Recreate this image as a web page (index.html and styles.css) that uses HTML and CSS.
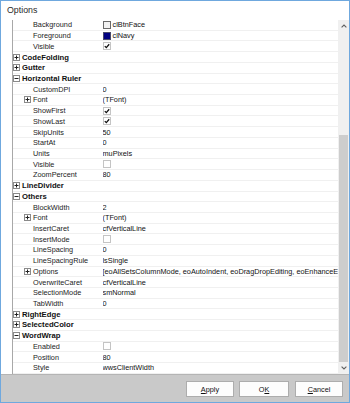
FILE: index.html
```html
<!DOCTYPE html>
<html>
<head>
<meta charset="utf-8">
<title>Options</title>
<link rel="stylesheet" href="styles.css">
</head>
<body>
<div class="window">
  <div class="titlebar">Options</div>
  <div class="grid-area">
    <div class="grid">
      <div class="rows">
        <div class="row l1"><div class="name">Background</div><div class="value"><svg class="sw" width="8" height="8" viewBox="0 0 8 8"><rect x="0.5" y="0.5" width="7" height="7" fill="#f2f2f2" stroke="#6a6a6a"/></svg><span>clBtnFace</span></div></div>
        <div class="row l1"><div class="name">Foreground</div><div class="value"><svg class="sw" width="8" height="8" viewBox="0 0 8 8"><rect x="0.5" y="0.5" width="7" height="7" fill="#000080" stroke="#4a4a6a"/></svg><span>clNavy</span></div></div>
        <div class="row l1"><div class="name">Visible</div><div class="value"><svg class="cb" width="8" height="8" viewBox="0 0 8 8"><rect x="0.5" y="0.5" width="7" height="7" fill="#fff" stroke="#c4c4c4"/><path d="M1.8 4.1L3.3 5.6L6.2 2.3" fill="none" stroke="#111" stroke-width="1.3"/></svg></div></div>
        <div class="row cat"><div class="name"><svg class="ex" width="7" height="7" viewBox="0 0 7 7"><rect x="0.5" y="0.5" width="6" height="6" fill="#fff" stroke="#8a8a8a"/><path d="M1.5 3.5h4M3.5 1.5v4" stroke="#222"/></svg><b>CodeFolding</b></div><div class="value"></div></div>
        <div class="row cat"><div class="name"><svg class="ex" width="7" height="7" viewBox="0 0 7 7"><rect x="0.5" y="0.5" width="6" height="6" fill="#fff" stroke="#8a8a8a"/><path d="M1.5 3.5h4M3.5 1.5v4" stroke="#222"/></svg><b>Gutter</b></div><div class="value"></div></div>
        <div class="row cat"><div class="name"><svg class="ex" width="7" height="7" viewBox="0 0 7 7"><rect x="0.5" y="0.5" width="6" height="6" fill="#fff" stroke="#8a8a8a"/><path d="M1.5 3.5h4" stroke="#222"/></svg><b>Horizontal Ruler</b></div><div class="value"></div></div>
        <div class="row l1"><div class="name">CustomDPI</div><div class="value">0</div></div>
        <div class="row l1x"><div class="name"><svg class="ex" width="7" height="7" viewBox="0 0 7 7"><rect x="0.5" y="0.5" width="6" height="6" fill="#fff" stroke="#8a8a8a"/><path d="M1.5 3.5h4M3.5 1.5v4" stroke="#222"/></svg><span>Font</span></div><div class="value">(TFont)</div></div>
        <div class="row l1"><div class="name">ShowFirst</div><div class="value"><svg class="cb" width="8" height="8" viewBox="0 0 8 8"><rect x="0.5" y="0.5" width="7" height="7" fill="#fff" stroke="#c4c4c4"/><path d="M1.8 4.1L3.3 5.6L6.2 2.3" fill="none" stroke="#111" stroke-width="1.3"/></svg></div></div>
        <div class="row l1"><div class="name">ShowLast</div><div class="value"><svg class="cb" width="8" height="8" viewBox="0 0 8 8"><rect x="0.5" y="0.5" width="7" height="7" fill="#fff" stroke="#c4c4c4"/><path d="M1.8 4.1L3.3 5.6L6.2 2.3" fill="none" stroke="#111" stroke-width="1.3"/></svg></div></div>
        <div class="row l1"><div class="name">SkipUnits</div><div class="value">50</div></div>
        <div class="row l1"><div class="name">StartAt</div><div class="value">0</div></div>
        <div class="row l1"><div class="name">Units</div><div class="value">muPixels</div></div>
        <div class="row l1"><div class="name">Visible</div><div class="value"><svg class="cb" width="8" height="8" viewBox="0 0 8 8"><rect x="0.5" y="0.5" width="7" height="7" fill="#fff" stroke="#c4c4c4"/></svg></div></div>
        <div class="row l1"><div class="name">ZoomPercent</div><div class="value">80</div></div>
        <div class="row cat"><div class="name"><svg class="ex" width="7" height="7" viewBox="0 0 7 7"><rect x="0.5" y="0.5" width="6" height="6" fill="#fff" stroke="#8a8a8a"/><path d="M1.5 3.5h4M3.5 1.5v4" stroke="#222"/></svg><b>LineDivider</b></div><div class="value"></div></div>
        <div class="row cat"><div class="name"><svg class="ex" width="7" height="7" viewBox="0 0 7 7"><rect x="0.5" y="0.5" width="6" height="6" fill="#fff" stroke="#8a8a8a"/><path d="M1.5 3.5h4" stroke="#222"/></svg><b>Others</b></div><div class="value"></div></div>
        <div class="row l1"><div class="name">BlockWidth</div><div class="value">2</div></div>
        <div class="row l1x"><div class="name"><svg class="ex" width="7" height="7" viewBox="0 0 7 7"><rect x="0.5" y="0.5" width="6" height="6" fill="#fff" stroke="#8a8a8a"/><path d="M1.5 3.5h4M3.5 1.5v4" stroke="#222"/></svg><span>Font</span></div><div class="value">(TFont)</div></div>
        <div class="row l1"><div class="name">InsertCaret</div><div class="value">cfVerticalLine</div></div>
        <div class="row l1"><div class="name">InsertMode</div><div class="value"><svg class="cb" width="8" height="8" viewBox="0 0 8 8"><rect x="0.5" y="0.5" width="7" height="7" fill="#fff" stroke="#c4c4c4"/></svg></div></div>
        <div class="row l1"><div class="name">LineSpacing</div><div class="value">0</div></div>
        <div class="row l1"><div class="name">LineSpacingRule</div><div class="value">lsSingle</div></div>
        <div class="row l1x"><div class="name"><svg class="ex" width="7" height="7" viewBox="0 0 7 7"><rect x="0.5" y="0.5" width="6" height="6" fill="#fff" stroke="#8a8a8a"/><path d="M1.5 3.5h4M3.5 1.5v4" stroke="#222"/></svg><span>Options</span></div><div class="value">[eoAllSetsColumnMode, eoAutoIndent, eoDragDropEditing, eoEnhanceEndKey, eoGroupUndo]</div></div>
        <div class="row l1"><div class="name">OverwriteCaret</div><div class="value">cfVerticalLine</div></div>
        <div class="row l1"><div class="name">SelectionMode</div><div class="value">smNormal</div></div>
        <div class="row l1"><div class="name">TabWidth</div><div class="value">0</div></div>
        <div class="row cat"><div class="name"><svg class="ex" width="7" height="7" viewBox="0 0 7 7"><rect x="0.5" y="0.5" width="6" height="6" fill="#fff" stroke="#8a8a8a"/><path d="M1.5 3.5h4M3.5 1.5v4" stroke="#222"/></svg><b>RightEdge</b></div><div class="value"></div></div>
        <div class="row cat"><div class="name"><svg class="ex" width="7" height="7" viewBox="0 0 7 7"><rect x="0.5" y="0.5" width="6" height="6" fill="#fff" stroke="#8a8a8a"/><path d="M1.5 3.5h4M3.5 1.5v4" stroke="#222"/></svg><b>SelectedColor</b></div><div class="value"></div></div>
        <div class="row cat"><div class="name"><svg class="ex" width="7" height="7" viewBox="0 0 7 7"><rect x="0.5" y="0.5" width="6" height="6" fill="#fff" stroke="#8a8a8a"/><path d="M1.5 3.5h4" stroke="#222"/></svg><b>WordWrap</b></div><div class="value"></div></div>
        <div class="row l1"><div class="name">Enabled</div><div class="value"><svg class="cb" width="8" height="8" viewBox="0 0 8 8"><rect x="0.5" y="0.5" width="7" height="7" fill="#fff" stroke="#c4c4c4"/></svg></div></div>
        <div class="row l1"><div class="name">Position</div><div class="value">80</div></div>
        <div class="row l1"><div class="name">Style</div><div class="value">wwsClientWidth</div></div>
      </div>
      <div class="scrollbar">
        <div class="arrow"><svg width="6" height="4" viewBox="0 0 6 4"><path d="M0.6 3.4L3 1L5.4 3.4" fill="none" stroke="#606060" stroke-width="1.1"/></svg></div>
        <div class="track-top"></div>
        <div class="thumb"></div>
        <div class="arrow"><svg width="6" height="4" viewBox="0 0 6 4"><path d="M0.6 0.6L3 3L5.4 0.6" fill="none" stroke="#606060" stroke-width="1.1"/></svg></div>
      </div>
    </div>
  </div>
  <div class="footer">
    <button class="btn apply"><u>A</u>pply</button>
    <button class="btn ok">O<u>K</u></button>
    <button class="btn cancel"><u>C</u>ancel</button>
  </div>
</div>
</body>
</html>
```

FILE: styles.css
```css
* {
  box-sizing: border-box;
  margin: 0;
  padding: 0;
}

html, body {
  width: 350px;
  height: 403px;
  overflow: hidden;
  background: #ffffff;
}

body {
  font-family: "Liberation Sans", Arial, sans-serif;
  font-size: 7.3px;
  color: #111;
}

.window {
  width: 350px;
  height: 403px;
  border: 1px solid #6fa8de;
  display: flex;
  flex-direction: column;
  background: #ffffff;
}

.titlebar {
  height: 19px;
  flex: none;
  padding-left: 6px;
  font-size: 8.8px;
  line-height: 19px;
  color: #2a2a2a;
}

.grid-area {
  height: 354px;
  flex: none;
  display: flex;
  padding-left: 11px;
}

.grid {
  flex: 1;
  display: flex;
  border-left: 1px solid #a8a8a8;
  min-width: 0;
}

.rows {
  flex: 1;
  min-width: 0;
  overflow: hidden;
}

.row {
  height: 10.73px;
  display: flex;
  align-items: center;
  border-bottom: 1px solid #f0f0f0;
  white-space: nowrap;
}

.name {
  width: 89.5px;
  flex: none;
  display: flex;
  align-items: center;
  color: #1c1c1c;
}

.row.l1 .name {
  padding-left: 20px;
}

.row.l1x .name {
  padding-left: 10.5px;
}

.row.l1x .ex {
  margin-right: 2.5px;
}

.row.cat .name {
  padding-left: 0.3px;
}

.row.cat .ex {
  margin-right: 1.7px;
}

.row.cat b {
  font-weight: bold;
  font-size: 7.7px;
  color: #111;
}

.ex, .cb, .sw {
  flex: none;
  display: block;
}

.value {
  flex: 1;
  min-width: 0;
  display: flex;
  align-items: center;
  overflow: hidden;
  color: #111;
}

.sw {
  margin-right: 2px;
}

.scrollbar {
  width: 11px;
  flex: none;
  background: #f0f0f0;
  display: flex;
  flex-direction: column;
  align-items: center;
}

.arrow {
  height: 12px;
  flex: none;
  display: flex;
  align-items: center;
  justify-content: center;
}

.track-top {
  height: 103px;
  flex: none;
}

.thumb {
  width: 9px;
  height: 227px;
  flex: none;
  background: #cdcdcd;
}

.footer {
  flex: 1;
  background: #c9c9c9;
  border-top: 1px solid #b4b4b4;
  display: flex;
  justify-content: flex-end;
  align-items: flex-start;
  padding: 6px 6px 0 0;
  gap: 5px;
}

.btn {
  height: 16px;
  width: 48px;
  background: #fdfdfd;
  border: 1px solid #adadad;
  font-family: "Liberation Sans", Arial, sans-serif;
  font-size: 7.3px;
  color: #111;
  display: flex;
  align-items: center;
  justify-content: center;
}

.btn.ok {
  width: 50px;
}

.btn.cancel {
  margin-left: 1px;
}
```
